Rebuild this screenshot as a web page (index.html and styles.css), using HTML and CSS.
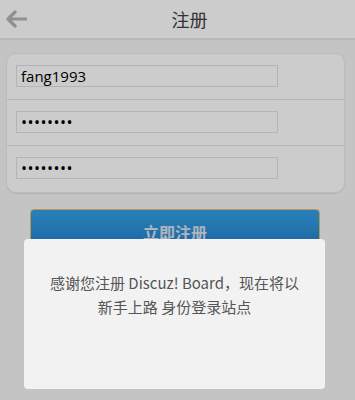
FILE: index.html
```html
<!DOCTYPE html>
<html lang="zh-CN">
<head>
<meta charset="UTF-8">
<meta name="viewport" content="width=device-width, initial-scale=1.0">
<title>注册</title>
<link rel="stylesheet" href="styles.css">
</head>
<body>
<div class="header">
    <a class="back" href="#">
        <svg width="22" height="18" viewBox="0 0 22 18">
            <path d="M10 2 L3 9 L10 16 M3 9 H21" fill="none" stroke="#b4b4b4" stroke-width="3.2" stroke-linecap="round" stroke-linejoin="round"/>
        </svg>
    </a>
    <h2>注册</h2>
</div>

<div class="form">
    <div class="row"><input type="text" value="fang1993"></div>
    <div class="row"><input class="pwd" type="password" value="12345678"></div>
    <div class="row"><input class="pwd" type="password" value="12345678"></div>
</div>

<button class="submit">立即注册</button>

<div class="mask"></div>
<div class="popup">
    <p>感谢您注册 Discuz! Board，现在将以<br>新手上路 身份登录站点</p>
</div>
</body>
</html>
```

FILE: styles.css
```css
body {
    margin: 0;
    font-family: "Noto Sans", "Noto Sans CJK SC", sans-serif;
    background-color: #f5f5f5;
}

.header {
    height: 38px;
    background-color: #fff;
    border-bottom: 2px solid #e6e6e6;
    display: flex;
    align-items: center;
}

.back {
    display: flex;
    padding: 0 0 0 5px;
    width: 30px;
}

.header h2 {
    flex: 1;
    margin: 0;
    padding-right: 11px;
    text-align: center;
    font-size: 18px;
    font-weight: normal;
    color: #404040;
    font-family: "Noto Sans CJK SC", sans-serif;
}

.form {
    margin: 13px 10px 0 6px;
    background-color: #fff;
    border: 1px solid #ececec;
    border-radius: 10px;
    box-shadow: 0 1px 1px rgba(0, 0, 0, 0.08);
}

.row {
    height: 46px;
    padding: 11px 0 0 9px;
    box-sizing: border-box;
    border-bottom: 1px solid #e6e6e6;
}

.row:last-child {
    border-bottom: none;
}

.row input {
    width: 262px;
    height: 22px;
    box-sizing: border-box;
    border: 1px solid #e2e2e2;
    background: #fff;
    padding: 0 4px;
    font-size: 15px;
    font-family: "Open Sans", "Noto Sans", sans-serif;
    color: #000;
    outline: none;
}

.row input.pwd {
    font-size: 16px;
    letter-spacing: 0.5px;
}

.submit {
    display: block;
    margin: 16px 0 0 30px;
    width: 290px;
    height: 46px;
    border: 1px solid #e6bb70;
    border-radius: 4px;
    background: linear-gradient(#35a2e8, #207ac6);
    color: #dae2ec;
    font-size: 16px;
    font-weight: bold;
    font-family: "Noto Sans CJK SC", sans-serif;
}

.mask {
    position: fixed;
    top: 0;
    left: 0;
    width: 100%;
    height: 100%;
    background-color: rgba(0, 0, 0, 0.2);
}

.popup {
    position: fixed;
    top: 239px;
    left: 24px;
    width: 301px;
    height: 150px;
    background-color: #f2f2f2;
    border-radius: 4px;
    text-align: center;
}

.popup p {
    margin: 0;
    padding-top: 32px;
    font-size: 15px;
    line-height: 24px;
    color: #555;
    font-family: "Noto Sans CJK SC", sans-serif;
}
```
